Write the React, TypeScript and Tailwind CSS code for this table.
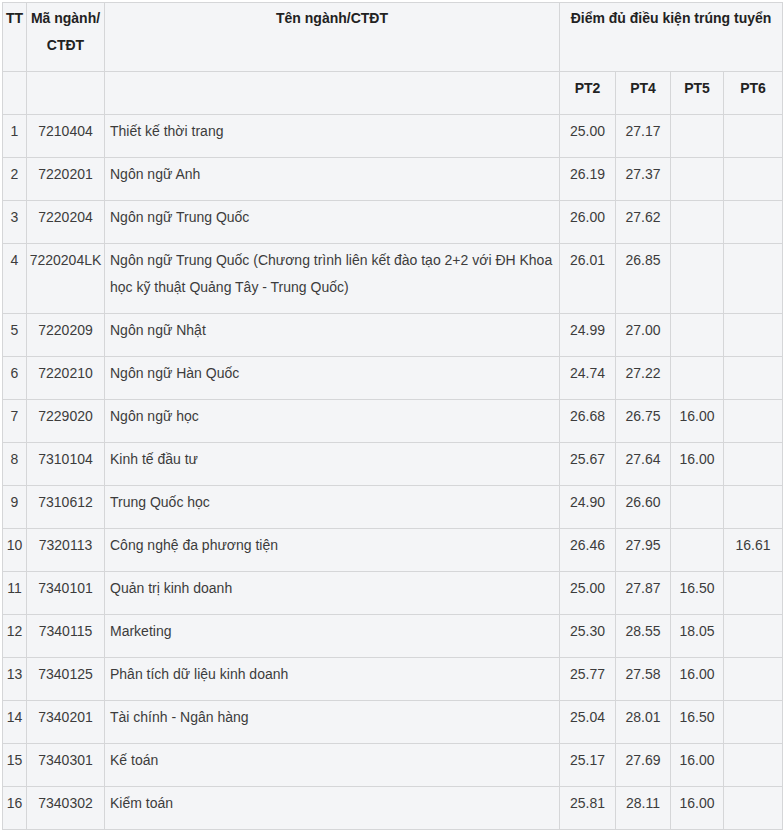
const rows: [string, string, string, string, string, string, string][] = [
  ['1', '7210404', 'Thiết kế thời trang', '25.00', '27.17', '', ''],
  ['2', '7220201', 'Ngôn ngữ Anh', '26.19', '27.37', '', ''],
  ['3', '7220204', 'Ngôn ngữ Trung Quốc', '26.00', '27.62', '', ''],
  ['4', '7220204LK', '', '26.01', '26.85', '', ''],
  ['5', '7220209', 'Ngôn ngữ Nhật', '24.99', '27.00', '', ''],
  ['6', '7220210', 'Ngôn ngữ Hàn Quốc', '24.74', '27.22', '', ''],
  ['7', '7229020', 'Ngôn ngữ học', '26.68', '26.75', '16.00', ''],
  ['8', '7310104', 'Kinh tế đầu tư', '25.67', '27.64', '16.00', ''],
  ['9', '7310612', 'Trung Quốc học', '24.90', '26.60', '', ''],
  ['10', '7320113', 'Công nghệ đa phương tiện', '26.46', '27.95', '', '16.61'],
  ['11', '7340101', 'Quản trị kinh doanh', '25.00', '27.87', '16.50', ''],
  ['12', '7340115', 'Marketing', '25.30', '28.55', '18.05', ''],
  ['13', '7340125', 'Phân tích dữ liệu kinh doanh', '25.77', '27.58', '16.00', ''],
  ['14', '7340201', 'Tài chính - Ngân hàng', '25.04', '28.01', '16.50', ''],
  ['15', '7340301', 'Kế toán', '25.17', '27.69', '16.00', ''],
  ['16', '7340302', 'Kiểm toán', '25.81', '28.11', '16.00', ''],
]

const cell = 'border border-[#d5d6d8] pt-[3px] pb-[12px] align-top leading-[27px]'
const th = `${cell} font-bold text-[#222]`
const top = 'border border-[#d5d6d8] pt-[2px] pb-[12px] align-top leading-[27px] font-bold text-[#222]'

export default function App() {
  return (
    <div className="min-h-screen bg-white pl-[2px] pt-[2px] font-['Liberation_Sans',Arial,sans-serif] text-[14px] text-[#3c3c3c]">
      <table className="w-[780px] table-fixed border-collapse bg-[#f4f5f7]">
        <colgroup>
          <col className="w-[24px]" />
          <col className="w-[78px]" />
          <col className="w-[455px]" />
          <col className="w-[56px]" />
          <col className="w-[55px]" />
          <col className="w-[53px]" />
          <col className="w-[59px]" />
        </colgroup>
        <thead>
          <tr>
            <th className={`${top} text-center`}>TT</th>
            <th className={`${top} text-center`}>
              Mã ngành/
              <br />
              CTĐT
            </th>
            <th className={`${top} text-center`}>Tên ngành/CTĐT</th>
            <th colSpan={4} className={`${top} text-center`}>
              Điểm đủ điều kiện trúng tuyển
            </th>
          </tr>
          <tr>
            <th className={th} />
            <th className={th} />
            <th className={th} />
            <th className={`${th} text-center`}>PT2</th>
            <th className={`${th} text-center`}>PT4</th>
            <th className={`${th} text-center`}>PT5</th>
            <th className={`${th} text-center`}>PT6</th>
          </tr>
        </thead>
        <tbody>
          {rows.map((r) => (
            <tr key={r[0]}>
              <td className={`${cell} text-center`}>{r[0]}</td>
              <td className={`${cell} whitespace-nowrap text-center`}>{r[1]}</td>
              <td className={`${cell} pl-[5px]`}>
                {r[0] === '4' ? (
                  <>
                    Ngôn ngữ Trung Quốc (Chương trình liên kết đào tạo 2+2 với ĐH Khoa
                    <br />
                    học kỹ thuật Quảng Tây - Trung Quốc)
                  </>
                ) : (
                  r[2]
                )}
              </td>
              <td className={`${cell} text-center`}>{r[3]}</td>
              <td className={`${cell} text-center`}>{r[4]}</td>
              <td className={`${cell} text-center`}>{r[5]}</td>
              <td className={`${cell} text-center`}>{r[6]}</td>
            </tr>
          ))}
        </tbody>
      </table>
    </div>
  )
}
